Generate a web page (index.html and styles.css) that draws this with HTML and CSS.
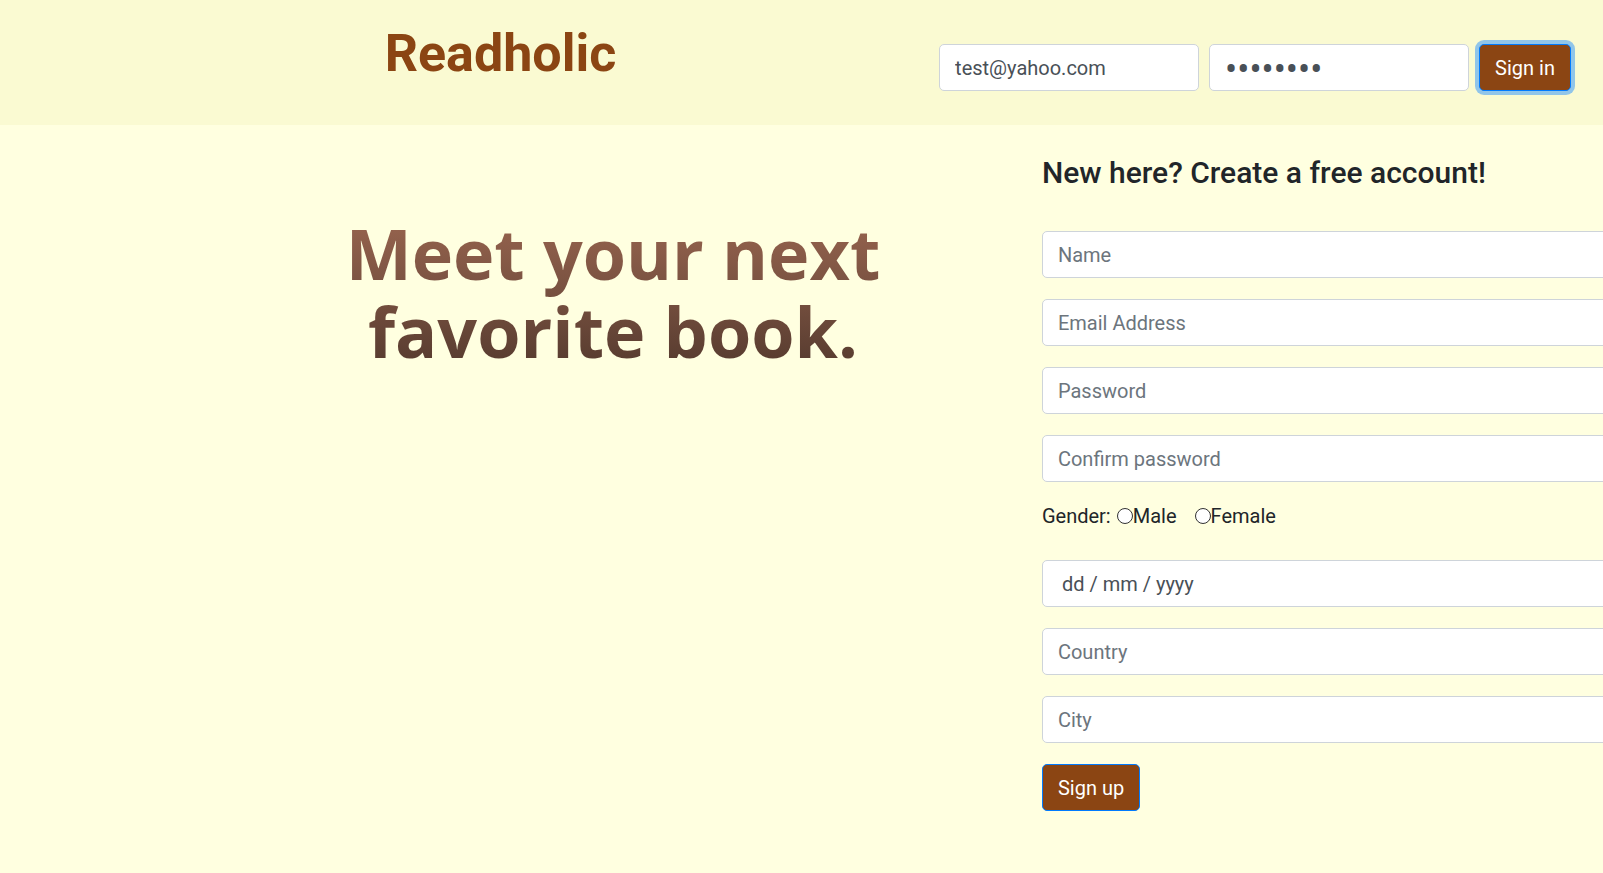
FILE: index.html
```html
<!DOCTYPE html>
<html lang="en">
<head>
<meta charset="utf-8">
<meta name="viewport" content="width=device-width, initial-scale=1">
<title>Readholic</title>
<link rel="stylesheet" href="styles.css">
</head>
<body>
<header class="site-header">
  <h1 class="brand">Readholic</h1>
  <form class="signin">
    <input class="field" type="email" aria-label="Email" value="test@yahoo.com">
    <input class="field field-masked" type="password" aria-label="Password" value="password">
    <button class="button button-active" type="button">Sign in</button>
  </form>
</header>
<main class="content">
  <p class="tagline">Meet your next<br>favorite book.</p>
  <section class="signup">
    <h2 class="signup-title">New here? Create a free account!</h2>
    <form class="signup-form">
      <input class="field" type="text" aria-label="Name" placeholder="Name">
      <input class="field" type="email" aria-label="Email Address" placeholder="Email Address">
      <input class="field" type="password" aria-label="Password" placeholder="Password">
      <input class="field" type="password" aria-label="Confirm password" placeholder="Confirm password">
      <div class="gender" role="radiogroup" aria-label="Gender">
        <span class="gender-label">Gender:</span>
        <label class="choice"><input class="radio" type="radio" name="gender">Male</label>
        <label class="choice"><input class="radio" type="radio" name="gender">Female</label>
      </div>
      <input class="field field-date" type="text" aria-label="Date of birth" placeholder="dd / mm / yyyy">
      <input class="field" type="text" aria-label="Country" placeholder="Country">
      <input class="field" type="text" aria-label="City" placeholder="City">
      <button class="button" type="button">Sign up</button>
    </form>
  </section>
</main>
</body>
</html>
```
FILE: styles.css
```css
* {
  box-sizing: border-box;
}

body {
  margin: 0;
  min-height: 100vh;
  overflow-x: hidden;
  background: #ffffe0;
  color: #212529;
  font: 20px/30px Roboto, "Liberation Sans", sans-serif;
}

.site-header {
  display: flex;
  justify-content: space-between;
  align-items: flex-start;
  padding: 24px 32px 32px 24%;
  min-height: 125px;
  background: #fafad2;
}

.brand {
  margin: 0;
  color: #8b4513;
  font-size: 52px;
  line-height: 60px;
  font-weight: 700;
}

.signin {
  display: flex;
  gap: 10px;
  padding-top: 20px;
}

.signin .field {
  width: 260px;
}

.field {
  width: 100%;
  height: 47px;
  padding: 7px 15px;
  border: 1px solid #ced4da;
  border-radius: 5px;
  background: #fff;
  color: #495057;
  font: inherit;
}

.field::placeholder {
  color: #6c757d;
  opacity: 1;
}

.field-masked {
  padding: 12px 15px 7px;
  font-size: 36px;
  line-height: 26px;
}

.field-date {
  padding-left: 19px;
}

.field-date::placeholder {
  color: #495057;
}

.button {
  height: 47px;
  padding: 7px 15px;
  border: 1px solid #007bff;
  border-radius: 5px;
  background: #8b4513;
  color: #fff;
  font: inherit;
}

.button-active {
  box-shadow: 0 0 0 4px #91c5e9;
}

.content {
  display: grid;
  grid-template-columns: 65% 40%;
}

.tagline {
  margin: 89px 0 0;
  padding-left: 184px;
  text-align: center;
  font: 700 70px/78px "Open Sans", "Noto Sans", sans-serif;
  background: linear-gradient(#99654f 0%, #7b5342 45%, #553a2e 100%);
  background-clip: text;
  -webkit-background-clip: text;
  color: transparent;
  align-self: start;
}

.signup {
  padding-top: 30px;
}

.signup-title {
  margin: 0 0 40px;
  font-size: 30px;
  line-height: 36px;
  font-weight: 500;
}

.signup-form {
  display: flex;
  flex-direction: column;
  align-items: flex-start;
  gap: 21px;
}

.gender {
  display: flex;
  gap: 18px;
  margin-top: -2px;
  padding-bottom: 8px;
}

.gender-label {
  margin-right: -12px;
}

.choice {
  display: flex;
  align-items: center;
}

.radio {
  appearance: none;
  width: 16px;
  height: 16px;
  margin: 0;
  border: 1px solid #333;
  border-radius: 50%;
  background: #fff;
}
```
